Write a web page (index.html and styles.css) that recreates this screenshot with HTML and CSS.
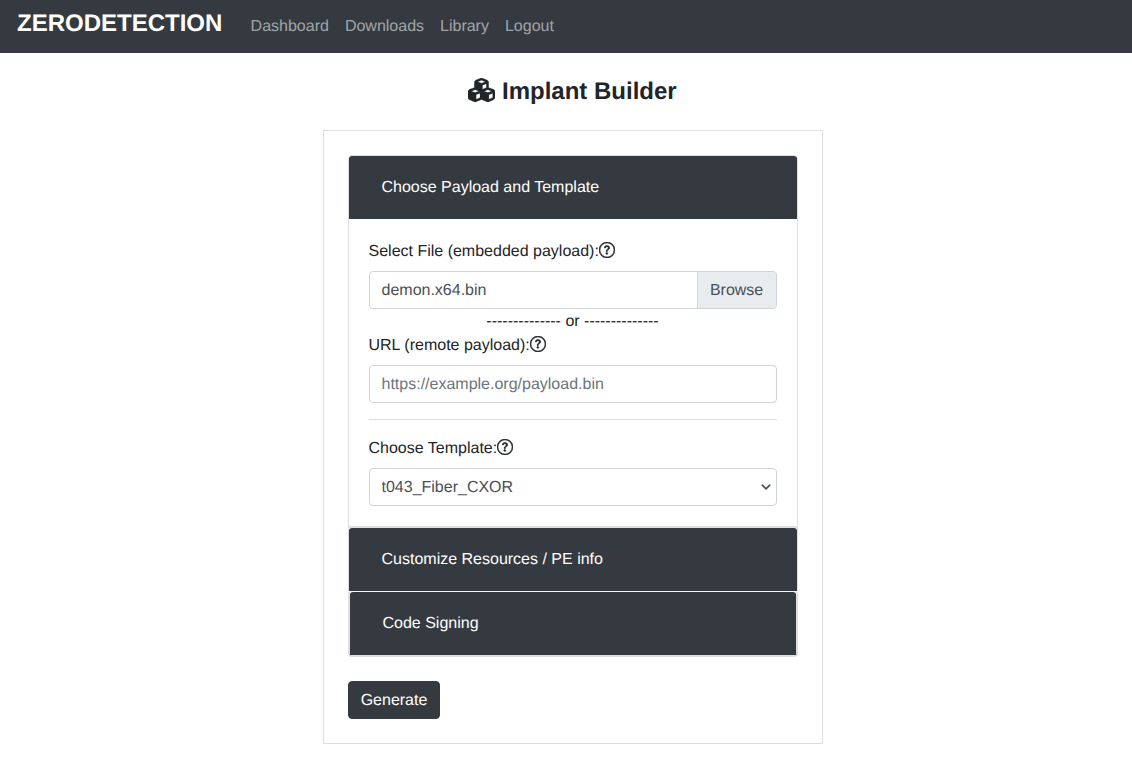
FILE: index.html
```html
<!DOCTYPE html>
<html lang="en">
<head>
<meta charset="utf-8">
<title>Implant Builder</title>
<link rel="stylesheet" href="styles.css">
</head>
<body>
<nav class="navbar">
  <a class="brand" href="#">ZERODETECTION</a>
  <ul class="nav-links">
    <li><a href="#">Dashboard</a></li>
    <li><a href="#">Downloads</a></li>
    <li><a href="#">Library</a></li>
    <li><a href="#">Logout</a></li>
  </ul>
</nav>
<main class="page">
  <h3 class="title"><svg class="cubes" viewBox="0 0 576 512" aria-hidden="true"><path d="M290.8 48.6l78.4 29.7L288 109.5 206.8 78.3l78.4-29.7c1.8-.7 3.8-.7 5.7 0zM136 92.5V204.7c-1.3 .4-2.6 .8-3.9 1.3l-96 36.4C14.4 250.6 0 271.5 0 294.7V413.9c0 22.2 13.1 42.3 33.5 51.3l96 42.2c14.4 6.3 30.7 6.3 45.1 0L288 457.5l113.5 49.9c14.4 6.3 30.7 6.3 45.1 0l96-42.2c20.3-8.9 33.5-29.1 33.5-51.3V294.7c0-23.3-14.4-44.1-36.1-52.4l-96-36.4c-1.3-.5-2.6-.9-3.9-1.3V92.5c0-23.3-14.4-44.1-36.1-52.4l-96-36.4c-12.8-4.8-26.9-4.8-39.7 0l-96 36.4C150.4 48.4 136 69.3 136 92.5zM392 210.6l-82.4 31.2V152.6L392 121v89.6zM154.8 250.9l78.4 29.7L152 311.7 70.8 280.6l78.4-29.7c1.8-.7 3.8-.7 5.7 0zm18.8 204.4V354.8L256 323.2v95.9l-82.4 36.2zM421.2 250.9c1.8-.7 3.8-.7 5.7 0l78.4 29.7L424 311.7l-81.2-31.1 78.4-29.7zM523.2 421.2l-77.6 34.1V354.8L528 323.2v90.7c0 3.2-1.9 6-4.8 7.3z"/></svg> Implant Builder</h3>
  <form class="card">
    <div class="accordion">
      <section class="item item-first">
        <h2 class="item-header">Choose Payload and Template</h2>
        <div class="item-body">
          <label class="field-label">Select File (embedded payload):<svg class="help" viewBox="0 0 16 16" aria-hidden="true"><path d="M8 15A7 7 0 1 1 8 1a7 7 0 0 1 0 14m0 1A8 8 0 1 0 8 0a8 8 0 0 0 0 16"/><path d="M5.255 5.786a.237.237 0 0 0 .241.247h.825c.138 0 .248-.113.266-.25.09-.656.54-1.134 1.342-1.134.686 0 1.314.343 1.314 1.168 0 .635-.374.927-.965 1.371-.673.489-1.206 1.06-1.168 1.987l.003.217a.25.25 0 0 0 .25.246h.811a.25.25 0 0 0 .25-.25v-.105c0-.718.273-.927 1.01-1.486.609-.463 1.244-.977 1.244-2.056 0-1.511-1.276-2.241-2.673-2.241-1.267 0-2.655.59-2.75 2.286m1.557 5.763c0 .533.425.927 1.01.927.609 0 1.028-.394 1.028-.927 0-.552-.42-.94-1.029-.94-.584 0-1.009.388-1.009.94"/></svg></label>
          <div class="file-group">
            <span class="file-name">demon.x64.bin</span>
            <span class="file-browse">Browse</span>
          </div>
          <div class="or">-------------- or --------------</div>
          <label class="field-label">URL (remote payload):<svg class="help" viewBox="0 0 16 16" aria-hidden="true"><path d="M8 15A7 7 0 1 1 8 1a7 7 0 0 1 0 14m0 1A8 8 0 1 0 8 0a8 8 0 0 0 0 16"/><path d="M5.255 5.786a.237.237 0 0 0 .241.247h.825c.138 0 .248-.113.266-.25.09-.656.54-1.134 1.342-1.134.686 0 1.314.343 1.314 1.168 0 .635-.374.927-.965 1.371-.673.489-1.206 1.06-1.168 1.987l.003.217a.25.25 0 0 0 .25.246h.811a.25.25 0 0 0 .25-.25v-.105c0-.718.273-.927 1.01-1.486.609-.463 1.244-.977 1.244-2.056 0-1.511-1.276-2.241-2.673-2.241-1.267 0-2.655.59-2.75 2.286m1.557 5.763c0 .533.425.927 1.01.927.609 0 1.028-.394 1.028-.927 0-.552-.42-.94-1.029-.94-.584 0-1.009.388-1.009.94"/></svg></label>
          <input class="control" type="text" placeholder="https://example.org/payload.bin">
          <hr class="divider">
          <label class="field-label">Choose Template:<svg class="help" viewBox="0 0 16 16" aria-hidden="true"><path d="M8 15A7 7 0 1 1 8 1a7 7 0 0 1 0 14m0 1A8 8 0 1 0 8 0a8 8 0 0 0 0 16"/><path d="M5.255 5.786a.237.237 0 0 0 .241.247h.825c.138 0 .248-.113.266-.25.09-.656.54-1.134 1.342-1.134.686 0 1.314.343 1.314 1.168 0 .635-.374.927-.965 1.371-.673.489-1.206 1.06-1.168 1.987l.003.217a.25.25 0 0 0 .25.246h.811a.25.25 0 0 0 .25-.25v-.105c0-.718.273-.927 1.01-1.486.609-.463 1.244-.977 1.244-2.056 0-1.511-1.276-2.241-2.673-2.241-1.267 0-2.655.59-2.75 2.286m1.557 5.763c0 .533.425.927 1.01.927.609 0 1.028-.394 1.028-.927 0-.552-.42-.94-1.029-.94-.584 0-1.009.388-1.009.94"/></svg></label>
          <select class="control select"><option>t043_Fiber_CXOR</option></select>
        </div>
      </section>
      <section class="item item-second">
        <h2 class="item-header">Customize Resources / PE info</h2>
      </section>
      <div class="gap-line"></div>
      <section class="item item-third">
        <h2 class="item-header">Code Signing</h2>
      </section>
    </div>
    <button class="generate" type="button">Generate</button>
  </form>
</main>
</body>
</html>
```
FILE: styles.css
```css
* { box-sizing: border-box; }
html, body { margin: 0; padding: 0; }
body {
  font-family: "Liberation Sans", Arial, sans-serif;
  font-size: 16px;
  line-height: 24px;
  color: #212529;
  background: #fff;
  text-rendering: geometricPrecision;
}
.navbar {
  display: flex;
  align-items: flex-start;
  height: 53px;
  padding: 8px 17px;
  background: #343a40;
}
.brand {
  padding-top: 2px;
  margin-right: 20.25px;
  font-size: 24px;
  font-weight: 700;
  line-height: 28px;
  color: #fff;
  text-decoration: none;
}
.nav-links {
  display: flex;
  margin: 0;
  padding: 6px 0 0;
  list-style: none;
}
.nav-links a {
  display: block;
  padding: 1px 8px;
  color: rgba(255, 255, 255, .55);
  text-decoration: none;
}
.page {
  padding: 24px 0 32px 14px;
}
.title {
  margin: 0 0 24px;
  padding-right: 1px;
  font-size: 24px;
  font-weight: 700;
  line-height: 29px;
  text-align: center;
}
.cubes {
  width: 27px;
  height: 24px;
  vertical-align: -3px;
  fill: #212529;
  stroke: #212529;
  stroke-width: 6;
}
.card {
  width: 500px;
  margin: 0 auto;
  padding: 24px;
  border: 1px solid rgba(0, 0, 0, .125);
}
.accordion { width: 450px; }
.item { border: 1px solid rgba(0, 0, 0, .125); }
.item-first { border-radius: 4px 4px 0 0; }
.item-second { border-bottom: 0; }
.item-header {
  margin: 0;
  padding: 20px 33px 19px 32.5px;
  font-size: 16px;
  font-weight: 400;
  line-height: 24px;
  color: #fff;
  background: #343a40;
}
.item-first .item-header { border-radius: 3px 3px 0 0; }
.item-second .item-header { border-radius: 3px 3px 0 0; }
.gap-line {
  height: 1px;
  margin: 0 1px;
  background: #f4f4f4;
}
.item-third {
  border-width: 0 1px 1px;
  border-radius: 0 0 4px 4px;
  box-shadow: inset 1px 0 0 rgba(0, 0, 0, .12), inset -1px 0 0 rgba(0, 0, 0, .12), inset 0 -1px 0 rgba(0, 0, 0, .12);
}
.item-third .item-header {
  margin: 0 1px 1px;
  border-radius: 3px 3px 0 0;
}
.item-body {
  padding: 20px;
}
.field-label {
  display: block;
  padding-top: 1px;
  margin-bottom: 7px;
  margin-left: -0.5px;
  line-height: 24px;
}
.help {
  width: 16px;
  height: 16px;
  margin-left: .25px;
  vertical-align: -1.5px;
  fill: #212529;
  stroke: #212529;
  stroke-width: .5;
}
.file-group {
  display: flex;
  height: 38px;
  border: 1px solid #ced4da;
  border-radius: 4px;
  color: #495057;
  overflow: hidden;
}
.file-name {
  flex: 1;
  padding: 7px 11.5px 5px;
}
.file-browse {
  padding: 7px 12.75px 5px 12px;
  background: #e9ecef;
  border-left: 1px solid #ced4da;
  color: #495057;
}
.or {
  padding: 1px 1px 0 0;
  margin-bottom: -1px;
  text-align: center;
}
.control {
  display: block;
  width: 100%;
  height: 38px;
  padding: 7px 11.5px 5px;
  border: 1px solid #ced4da;
  border-radius: 4px;
  background: #fff;
  font-family: inherit;
  font-size: 16px;
  line-height: 24px;
  color: #495057;
  text-rendering: geometricPrecision;
}
.control::placeholder { color: #6c757d; opacity: 1; }
.select {
  padding-right: 28px;
  appearance: none;
  background-image: url("data:image/svg+xml,%3csvg xmlns='http://www.w3.org/2000/svg' viewBox='0 0 16 16'%3e%3cpath fill='none' stroke='%23495057' stroke-linecap='round' stroke-linejoin='round' stroke-width='2.6' d='M2 5l6 6 6-6'/%3e%3c/svg%3e");
  background-repeat: no-repeat;
  background-position: right 5px center;
  background-size: 10px 10px;
}
.divider {
  height: 1px;
  margin: 16px 0;
  border: 0;
  background: #dfdfdf;
}
.generate {
  display: block;
  width: 92px;
  height: 38px;
  margin-top: 24px;
  padding: 7px 0 5px;
  border: 1px solid #343a40;
  border-radius: 4px;
  background: #343a40;
  color: #fff;
  font-family: inherit;
  font-size: 16px;
  line-height: 24px;
  text-align: center;
  text-rendering: geometricPrecision;
}
```
